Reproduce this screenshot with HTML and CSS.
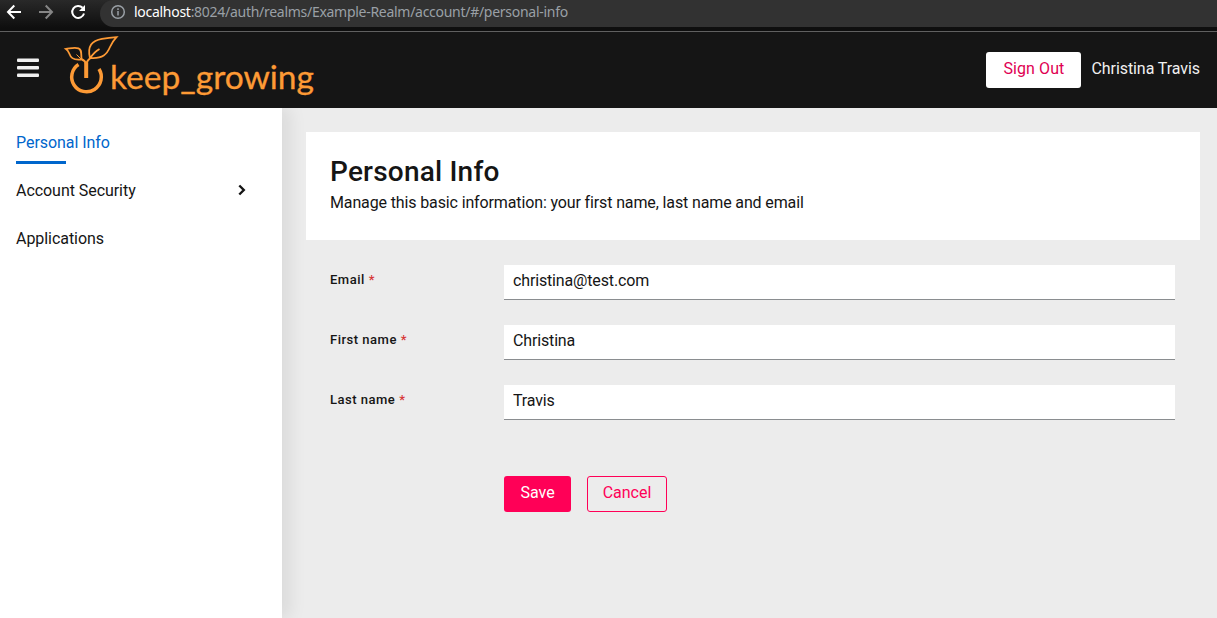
FILE: index.html
```html
<!DOCTYPE html>
<html lang="en">
<head>
<meta charset="utf-8">
<title>Account Management</title>
<link rel="stylesheet" href="styles.css">
</head>
<body>
<div class="browser-bar">
  <svg class="browser-icons" width="100" height="27" viewBox="0 0 100 27" fill="none" stroke-width="2">
    <path d="M21 12H8M14.3 5.5L8 12l6.3 6.5" stroke="#fff"/>
    <path d="M39 12h13M45.700 5.500L52 12l-6.300 6.500" stroke="#858585"/>
    <path d="M82.600 7.800A6 6 0 1 0 84 13.500" stroke="#fff"/>
    <path d="M85 5v6h-6z" fill="#fff"/>
  </svg>
  <div class="address">
    <svg width="16" height="16" viewBox="0 0 16 16" fill="none" stroke="#9aa0a6" stroke-width="1.500"><circle cx="8" cy="8" r="6.300"/><path d="M8 7v4.500M8 4.300v1.700"/></svg>
    <span class="url"><span class="host">localhost</span>:8024/auth/realms/Example-Realm/account/#/personal-info</span>
  </div>
</div>
<header class="masthead">
  <svg class="menu" width="22" height="20" viewBox="0 0 22 20" fill="#f0f0f0"><rect y="0.500" width="22" height="3.500" rx="1"/><rect y="8" width="22" height="3.500" rx="1"/><rect y="15.500" width="22" height="3.500" rx="1"/></svg>
  <svg class="logo" width="254" height="70" viewBox="62 33 254 70" fill="none" stroke="#fd9a35">
    <path d="M78.500 64.500A14.800 14.800 0 1 0 99 69" stroke-width="3.500"/>
    <path d="M86.200 78V62.500" stroke-width="4"/>
    <path d="M86.200 64C85.500 61.500 83.500 60 81 59M86.500 63.500C87 60.500 89 59 91 57.500" stroke-width="2"/>
    <path d="M81 59.500C72.500 60.500 70.500 57 69 53Q68 50.500 66 49C70 48.500 74 46.800 78.500 48.300C82 49.700 81 53 81.500 59" stroke-width="1.800"/>
    <path d="M90 58.500C87 46 92 40.500 102 38.800Q109 37.700 116.500 37.200Q112.500 41.500 110 47C107 54 103 59 90 58M90 58.500Q94 52 99.500 49" stroke-width="1.800"/>
    <path d="M81 59L76.500 54.500" stroke-width="1"/>
    <text class="wordmark" x="110" y="89" textLength="204" lengthAdjust="spacingAndGlyphs">keep_growing</text>
  </svg>
  <div class="account"><button class="btn sign-out">Sign Out</button><span class="username">Christina Travis</span></div>
</header>
<div class="body">
  <nav class="sidebar">
    <a class="nav-item active"><span>Personal Info</span></a>
    <a class="nav-item"><span>Account Security</span><svg width="8" height="12" viewBox="0 0 8 12" fill="none" stroke="#151515" stroke-width="2.400"><path d="M1.300 1.500L5.800 6 1.300 10.500"/></svg></a>
    <a class="nav-item"><span>Applications</span></a>
  </nav>
  <main class="content">
    <section class="intro"><h1>Personal Info</h1><p>Manage this basic information: your first name, last name and email</p></section>
    <form class="form">
      <div class="row"><label for="email">Email<span>*</span></label><input id="email" value="christina@test.com"></div>
      <div class="row"><label for="first">First name<span>*</span></label><input id="first" value="Christina"></div>
      <div class="row"><label for="last">Last name<span>*</span></label><input id="last" value="Travis"></div>
      <div class="actions"><button type="button" class="btn save">Save</button><button type="button" class="btn cancel">Cancel</button></div>
    </form>
  </main>
</div>
</body>
</html>
```
FILE: styles.css
```css
* { box-sizing: border-box; }
body { margin: 0; height: 618px; overflow: hidden; background: #ececec; color: #151515; font: 16px/24px Roboto, sans-serif; }
svg { display: block; flex: none; }
.browser-bar { height: 32px; display: flex; background: linear-gradient(#292929, #0e0e0e 28px); border-bottom: 1px solid #606060; }
.address { flex: 1; height: 27px; padding: 0 0 3px 10px; display: flex; align-items: center; gap: 8px; background: #323232; border-radius: 14px 0 0 14px; }
.url { font: 14px/20px "Noto Sans", sans-serif; color: #9aa0a6; letter-spacing: -0.28px; white-space: nowrap; }
.host { color: #fff; }
.masthead { height: 76px; display: flex; align-items: center; padding: 0 17px; background: #151515; }
.menu { margin-bottom: 5px; }
.logo { margin: 0 0 4px 23px; }
.wordmark { font: 33px Lato, sans-serif; fill: #fd9a35; stroke: #fd9a35; stroke-width: .3px; }
.account { margin-left: auto; display: flex; align-items: center; gap: 10px; color: #f0f0f0; }
.username { letter-spacing: -.07px; padding-bottom: 3px; }
.btn { height: 36px; padding: 0 0 3px; border: 0; border-radius: 3px; font: 16px/24px Roboto, sans-serif; text-align: center; }
.sign-out { width: 95px; background: #fff; color: #e00052; letter-spacing: .1px; }
.body { height: 510px; display: flex; }
.sidebar { width: 282px; flex: none; background: #fff; padding-top: 10px; box-shadow: 8px 0 16px rgba(3,3,3,.08); clip-path: inset(0 -24px 0 0); }
.nav-item { height: 48px; margin-left: 16px; padding: 0 36px 0 0; display: flex; align-items: center; justify-content: space-between; letter-spacing: -.05px; }
.nav-item span { padding-top: 2px; }
.active { color: #06c; background: linear-gradient(#06c, #06c) 0 43px / 50px 3px no-repeat; }
.content { flex: 1; padding: 24px 17px 0 24px; }
.intro { height: 108px; padding: 24px; background: #fff; }
h1 { margin: 0; font: 500 28px/32px Roboto, sans-serif; letter-spacing: .2px; }
p { margin: 3px 0 0; letter-spacing: -.13px; }
.form { padding: 25px 25px 0 24px; display: grid; gap: 24px; }
.row { display: grid; grid-template-columns: 174px 1fr; height: 36px; }
label { font-size: 13px; font-weight: 500; line-height: 30px; letter-spacing: .5px; }
label span { color: #d73737; margin-left: 4px; }
input { width: 100%; height: 35px; padding: 0 8px 3px 9px; border: 0; border-bottom: 1px solid #8a8d90; background: #fff; outline: 0; color: #151515; font: 16px/24px Roboto, sans-serif; letter-spacing: -.15px; border-radius: 0; }
.actions { display: flex; gap: 16px; padding: 31px 0 0 174px; }
.save { width: 67px; background: #ff0057; color: #fff; }
.cancel { width: 80px; border: 1px solid #ff0057; background: transparent; color: #ff0057; }
```
